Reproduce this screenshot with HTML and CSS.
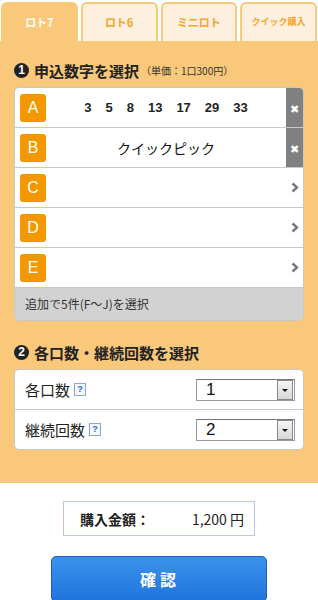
FILE: index.html
```html
<!DOCTYPE html>
<html lang="ja">
<head>
  <meta charset="UTF-8" />
  <meta name="viewport" content="width=device-width, initial-scale=1.0" />
  <title>ロト7 購入</title>
  <link rel="stylesheet" href="styles.css">
</head>
<body>
  <div class="tabs">
    <div class="tab active">ロト7</div>
    <div class="tab">ロト6</div>
    <div class="tab">ミニロト</div>
    <div class="tab small">クイック購入</div>
  </div>

  <div class="panel">
    <h2><span class="num">1</span>申込数字を選択<small>（単価：1口300円）</small></h2>
    <div class="list">
      <div class="row">
        <span class="badge">A</span>
        <span class="value nums"><i>3</i><i>5</i><i>8</i><i>13</i><i>17</i><i>29</i><i>33</i></span>
        <span class="del">&#10006;</span>
      </div>
      <div class="row">
        <span class="badge">B</span>
        <span class="value">クイックピック</span>
        <span class="del">&#10006;</span>
      </div>
      <div class="row">
        <span class="badge">C</span>
        <span class="value"></span>
        <span class="arrow"><svg width="8" height="11" viewBox="0 0 8 11"><path d="M1.5 1.5 L6 5.5 L1.5 9.5" fill="none" stroke="#777" stroke-width="2.4"/></svg></span>
      </div>
      <div class="row">
        <span class="badge">D</span>
        <span class="value"></span>
        <span class="arrow"><svg width="8" height="11" viewBox="0 0 8 11"><path d="M1.5 1.5 L6 5.5 L1.5 9.5" fill="none" stroke="#777" stroke-width="2.4"/></svg></span>
      </div>
      <div class="row">
        <span class="badge">E</span>
        <span class="value"></span>
        <span class="arrow"><svg width="8" height="11" viewBox="0 0 8 11"><path d="M1.5 1.5 L6 5.5 L1.5 9.5" fill="none" stroke="#777" stroke-width="2.4"/></svg></span>
      </div>
      <div class="more">追加で5件(F〜J)を選択</div>
    </div>

    <h2 class="second"><span class="num">2</span>各口数・継続回数を選択</h2>
    <div class="list">
      <div class="row opt">
        <span class="label">各口数 <span class="help">?</span></span>
        <div class="select"><span>1</span><b></b></div>
      </div>
      <div class="row opt">
        <span class="label">継続回数 <span class="help">?</span></span>
        <div class="select"><span>2</span><b></b></div>
      </div>
    </div>
  </div>

  <div class="bottom">
    <div class="price">
      <span class="price-label">購入金額：</span>
      <span class="price-value">1,200 円</span>
    </div>
    <button class="confirm">確認</button>
  </div>
</body>
</html>
```

FILE: styles.css
```css
body {
  margin: 0;
  font-family: "Noto Sans CJK JP", "Liberation Sans", sans-serif;
  color: #222;
  background: #fff;
}
.tabs {
  display: flex;
  gap: 3px;
  padding: 2px 1px 0 1px;
  height: 39px;
}
.tab {
  flex: 1;
  display: flex;
  justify-content: center;
  align-items: center;
  background: #fdf0de;
  border: 2px solid #f9c87a;
  border-bottom: none;
  border-radius: 6px 6px 0 0;
  color: #f5a32a;
  font-size: 11px;
  font-weight: bold;
  padding-bottom: 2px;
}
.tab.small {
  font-size: 9px;
}
.tab.active {
  background: #f9c87a;
  color: #fff;
}
.panel {
  background: #f9c87a;
  padding: 18px 14px 33px;
}
h2 {
  margin: 0 0 6px;
  height: 22px;
  display: flex;
  align-items: center;
  font-size: 15px;
  font-weight: bold;
  color: #222;
}
h2.second {
  margin-top: 20px;
}
h2 small {
  font-size: 10px;
  font-weight: normal;
  margin-left: 2px;
  color: #333;
}
.num {
  width: 15px;
  height: 15px;
  border-radius: 50%;
  background: #222;
  color: #fff;
  font-family: "Liberation Sans", sans-serif;
  font-size: 12px;
  font-weight: bold;
  display: inline-flex;
  justify-content: center;
  align-items: center;
  margin-right: 5px;
}
.list {
  background: #fff;
  border: 1px solid #c8c8c8;
  border-radius: 5px;
  overflow: hidden;
}
.row {
  display: flex;
  align-items: stretch;
  height: 39px;
  border-bottom: 1px solid #c8c8c8;
}
.row:last-child {
  border-bottom: none;
}
.badge {
  align-self: center;
  width: 26px;
  height: 28px;
  margin-left: 5px;
  background: #f39800;
  border-radius: 3px;
  color: #fff;
  font-family: "Liberation Sans", sans-serif;
  font-size: 16px;
  display: flex;
  justify-content: center;
  align-items: center;
}
.value {
  flex: 1;
  display: flex;
  justify-content: center;
  align-items: center;
  font-size: 14px;
  color: #111;
}
.nums i {
  font-style: normal;
  font-family: "Liberation Sans", sans-serif;
  font-size: 13px;
  font-weight: bold;
  margin: 0 7px;
  color: #222;
}
.del {
  width: 17px;
  background: #808080;
  color: #fff;
  font-size: 11px;
  display: flex;
  justify-content: center;
  align-items: center;
}
.arrow {
  width: 17px;
  display: flex;
  justify-content: center;
  align-items: center;
}
.more {
  background: #d2d2d2;
  height: 32px;
  line-height: 32px;
  padding-left: 10px;
  font-size: 12px;
  color: #333;
}
.opt {
  align-items: center;
  justify-content: space-between;
  padding: 0 8px 0 10px;
}
.label {
  font-size: 15px;
  color: #222;
  display: flex;
  align-items: center;
  gap: 4px;
}
.help {
  width: 10px;
  height: 11px;
  border: 1px solid #8ea6c6;
  background: #f4f8fc;
  color: #2a64c8;
  font-family: "Liberation Sans", sans-serif;
  font-size: 9px;
  font-weight: bold;
  line-height: 11px;
  text-align: center;
}
.select {
  width: 97px;
  height: 20px;
  border: 1px solid #999;
  border-top-color: #777;
  display: flex;
  align-items: center;
  justify-content: space-between;
  background: #fff;
}
.select span {
  font-family: "Liberation Sans", sans-serif;
  font-size: 17px;
  padding-left: 9px;
  color: #111;
}
.select b {
  width: 14px;
  height: 18px;
  margin-right: 1px;
  border: 1px solid #888;
  background: linear-gradient(#f4f4f4, #d8d8d8);
  position: relative;
}
.select b::after {
  content: "";
  position: absolute;
  left: 4px;
  top: 8px;
  border-left: 3px solid transparent;
  border-right: 3px solid transparent;
  border-top: 3px solid #111;
}
.bottom {
  display: flex;
  flex-direction: column;
  align-items: center;
  padding-top: 18px;
}
.price {
  width: 164px;
  height: 33px;
  border: 1px solid #b9c9ea;
  display: flex;
  align-items: center;
  justify-content: space-between;
  padding: 0 10px 0 16px;
  font-size: 14px;
}
.price-label {
  font-weight: bold;
  color: #222;
}
.price-value {
  color: #222;
}
.confirm {
  margin-top: 20px;
  width: 216px;
  height: 46px;
  border: 1px solid #1b5fb8;
  border-radius: 5px;
  background: linear-gradient(#3a92ec, #1f74dc);
  color: #fff;
  font-family: "Noto Sans CJK JP", sans-serif;
  font-size: 16px;
  font-weight: bold;
  letter-spacing: 4px;
  padding-left: 8px;
}
```
